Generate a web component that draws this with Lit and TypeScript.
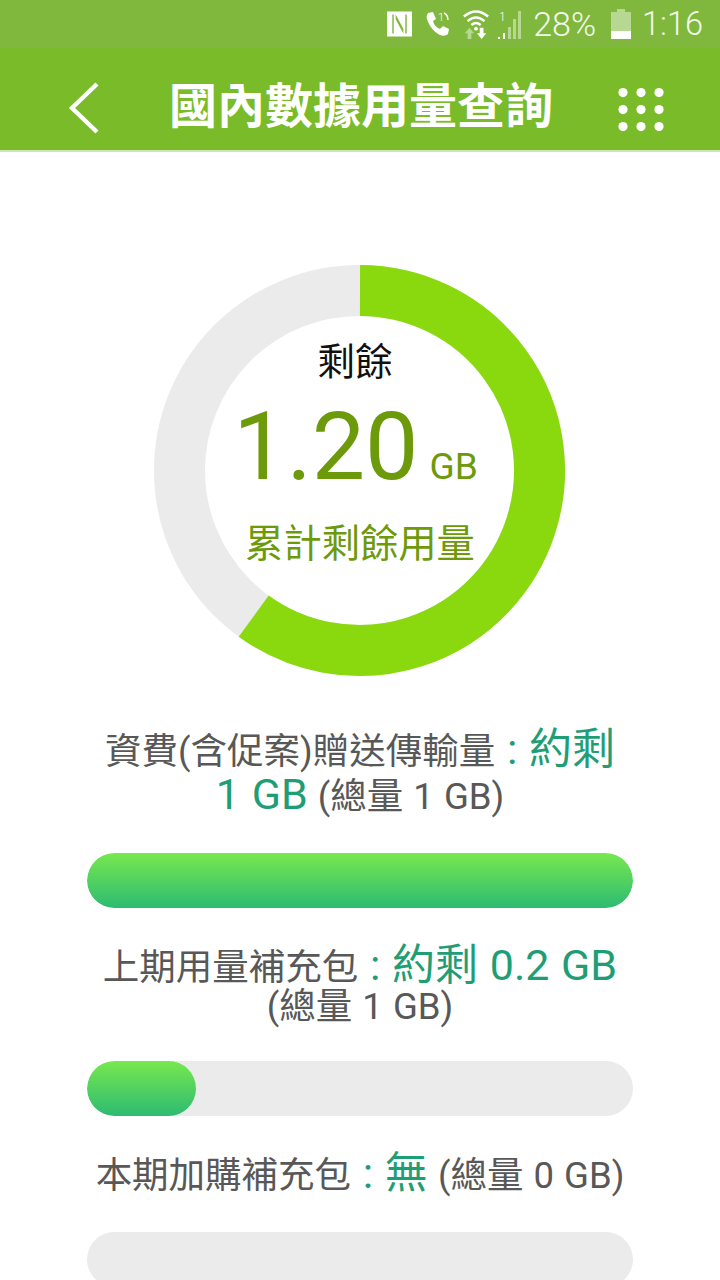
import { LitElement, html, css, svg } from "lit";
import { customElement } from "lit/decorators.js";

const dots = [0, 1, 2].flatMap((r) => [0, 1, 2].map((c) => svg`<circle cx=${5 + c * 18} cy=${4.6 + r * 17} r="4.6" fill="#fff"/>`));

@customElement("app-root")
export class AppRoot extends LitElement {
  static styles = css`
    :host { display: block; width: 720px; height: 1280px; overflow: hidden; background: #fff;
      font-family: Roboto, "Noto Sans CJK TC", sans-serif; color: #585858; }
    .status { height: 48px; background: #80b83d; display: flex; align-items: center; justify-content: flex-end;
      padding-right: 17px; color: #f3f8ec; font-size: 32.5px; box-sizing: border-box; font-weight: 300; }
    .status svg { display: block; flex: none; }
    .pct { margin-left: 10px; font-size: 34px; }
    .time { margin-left: 11px; }
    .bar { height: 102px; box-sizing: content-box; background: #79bb28; border-bottom: 2px solid #cfe3b5; display: flex; align-items: center;
      justify-content: space-between; padding: 0 56px 0 68px; }
    .bar > * { position: relative; top: 8px; }
    .bar > .chev { top: 9px; }
    .bar > .grid { top: 11px; }
    .bar h1 { margin: 0 0 0 4px; color: #fff; font-size: 48px; font-weight: 700; line-height: 1; }
    .donut { position: relative; width: 412px; height: 412px; margin: 113px auto 0; }
    .donut > svg { display: block; }
    .center { position: absolute; inset: 0; display: flex; flex-direction: column; align-items: center; }
    .rem { margin: 71px 10px 0 0; font-size: 37.5px; line-height: 52px; color: #111; }
    .val { color: #6d9a0a; font-size: 95px; line-height: 100px; margin: 9px 9px 0 0; white-space: nowrap; }
    .val small { font-size: 37px; margin-left: 11px; }
    .cum { color: #6d9a0a; font-size: 38.3px; line-height: 52px; margin-top: 1px; }
    .rows { padding: 0 87px; margin-top: 50px; }
    .row { text-align: center; font-size: 36.5px; margin: 0 -20px; word-spacing: 1px; white-space: nowrap; }
    .row b { font-weight: 400; color: #1f9e75; font-size: 43px; }
    .row .line { height: 45px; line-height: 45px; }
    .r1 { height: 102px; }
    .r2 { height: 97px; margin-top: 35px; }
    .r2 .line + .line { height: 38px; line-height: 38px; }
    .r3 { height: 48px; margin-top: 35px; }
    .track { height: 55px; border-radius: 28px; background: #ebebeb; overflow: hidden; margin-top: 24px; }
    .t2 { margin-top: 21px; }
    .t3 { margin-top: 33px; }
    .fill { height: 100%; border-radius: 28px; background: linear-gradient(#77e84f, #2dbb72); }
  `;

  render() {
    return html`
      <div class="status">
        <svg width="25" height="26" viewBox="0 0 26 26">
          <path fill-rule="evenodd" fill="#fff" d="M0 0H26V26H0ZM7 3H5.500V23H7ZM20.500 3H19V23H20.500ZM9 3V8L17 23V18Z"/>
        </svg>
        <svg style="margin-left:13px" width="26" height="30" viewBox="0 0 26 30">
          <path fill="#fff" d="M3 4 8 3l3 7-3 2c1 4 3 6 7 8l3-3 6 3-1 5c-2 2-5 2-8 1C9 23 4 17 2 10 1 8 2 6 3 4Z"/>
          <text x="13" y="12" font-size="11" fill="#fff" font-family="Roboto">1</text>
          <path d="M19 4q4 2 4 7" stroke="#fff" stroke-width="1.4" fill="none"/>
        </svg>
        <svg style="margin-left:11px" width="28" height="32" viewBox="0 0 30 32">
          <path d="M2 8Q15 -3 28 8M6 13Q15 5 24 13M10 17Q15 13 20 17" stroke="#fff" stroke-width="2.6" fill="none"/>
          <circle cx="15" cy="21" r="2" fill="#fff"/>
          <path fill="#b7d892" d="M8 20l-5 6h3v6h4v-6h3Z"/>
          <path fill="#fff" d="M19 20h4v6h3l-5 6-5-6h3Z"/>
        </svg>
        <svg style="margin-left:7px" width="26" height="30" viewBox="0 0 26 30">
          <text x="2" y="12" font-size="12" fill="#fff" font-family="Roboto">1</text>
          <path fill="#fff" d="M1 28h2v2H1ZM6 24h2v6H6Z"/>
          <path fill="#b7d892" d="M11 18h3v12h-3ZM16 10h3v20h-3ZM21 2h3v28h-3Z"/>
        </svg>
        <span class="pct">28%</span>
        <svg style="margin-left:15px" width="20" height="30" viewBox="0 0 20 30">
          <path fill="#b7d892" d="M6 0h8v3h6v19H0V3h6Z"/>
          <rect y="22" width="20" height="8" fill="#fff"/>
        </svg>
        <span class="time">1:16</span>
      </div>
      <div class="bar">
        <svg class="chev" width="32" height="52" viewBox="0 0 32 52"><path d="M29 2 4 26l25 24" stroke="#fff" stroke-width="4.4" fill="none"/></svg>
        <h1>國內數據用量查詢</h1>
        <svg class="grid" width="46" height="44" viewBox="0 0 46 44">${dots}</svg>
      </div>
      <div class="donut">
        <svg width="412" height="412" viewBox="0 0 412 412">
          <circle cx="205.500" cy="205.500" r="180" fill="none" stroke="#ebebeb" stroke-width="51"/>
          <path d="M206 25.500A180 180 0 1 1 99.700 351.100" fill="none" stroke="#8ad90f" stroke-width="51"/>
        </svg>
        <div class="center">
          <div class="rem">剩餘</div>
          <div class="val">1.20<small>GB</small></div>
          <div class="cum">累計剩餘用量</div>
        </div>
      </div>
      <div class="rows">
        <div class="row r1">
          <div class="line">資費(含促案)贈送傳輸量<b> : 約剩</b></div>
          <div class="line"><b>1 GB</b> (總量 1 GB)</div>
        </div>
        <div class="track"><div class="fill" style="width:100%"></div></div>
        <div class="row r2">
          <div class="line">上期用量補充包<b> : 約剩 0.2 GB</b></div>
          <div class="line">(總量 1 GB)</div>
        </div>
        <div class="track t2"><div class="fill" style="width:20%"></div></div>
        <div class="row r3">
          <div class="line">本期加購補充包<b> : 無</b> (總量 0 GB)</div>
        </div>
        <div class="track t3"></div>
      </div>
    `;
  }
}
